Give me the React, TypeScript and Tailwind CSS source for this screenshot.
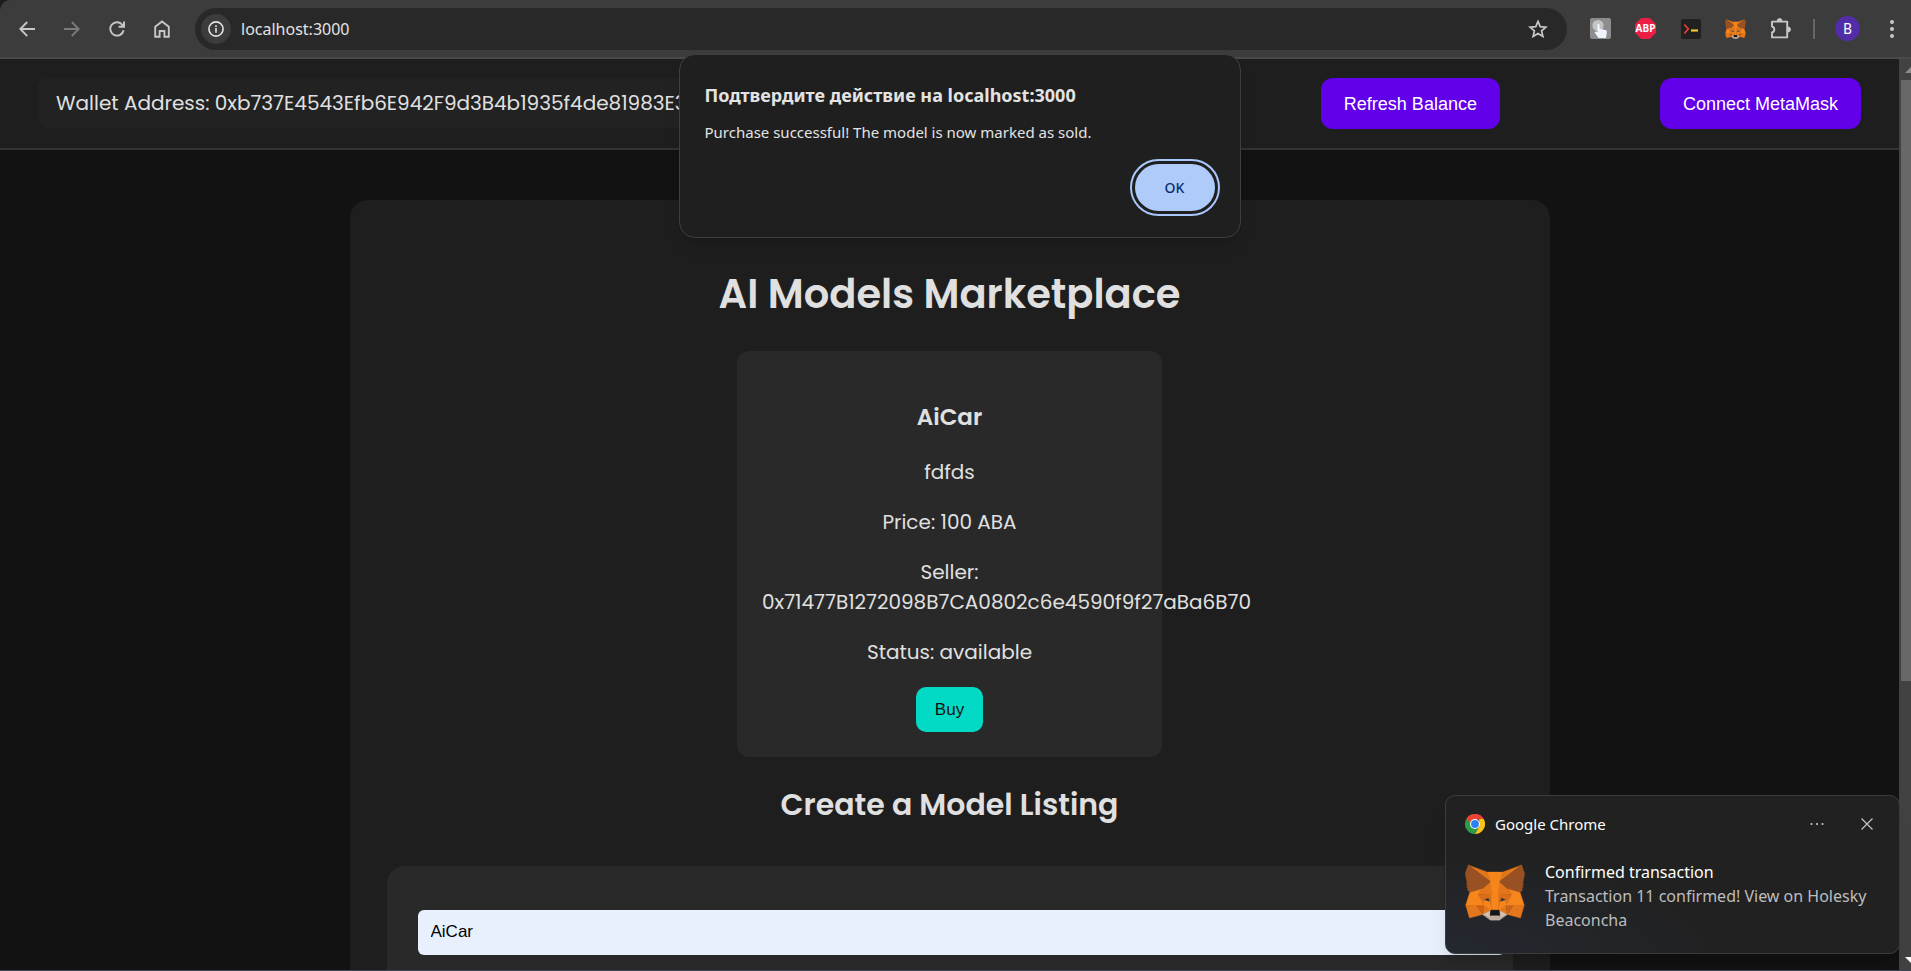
import React from "react";

const UI_FONT = "font-['Segoe_UI','Noto_Sans',sans-serif]";
const PAGE_FONT = "font-[Poppins,Inter,sans-serif]";
const FORM_FONT = "font-['Liberation_Sans',Arial,sans-serif]";

const FOX: [string, string][] = [
  ["#e2761b", "274.1,35.5 174.6,109.4 193,65.8"],
  ["#e2761b", "44.4,35.5 143.1,110.1 125.6,65.8"],
  ["#e4761b", "238.3,206.8 211.8,247.4 268.5,263 284.8,207.7"],
  ["#e4761b", "33.9,207.7 50.1,263 106.8,247.4 80.3,206.8"],
  ["#e4761b", "103.6,138.2 87.8,162.1 144.1,164.6 142.1,104.1"],
  ["#e4761b", "214.9,138.2 175.9,103.4 174.6,164.6 230.8,162.1"],
  ["#e4761b", "106.8,247.4 140.6,230.9 111.4,208.1"],
  ["#e4761b", "177.9,230.9 211.8,247.4 207.1,208.1"],
  ["#d7c1b3", "211.8,247.4 177.9,230.9 180.6,253 180.3,262.3"],
  ["#d7c1b3", "106.8,247.4 138.3,262.3 138.1,253 140.6,230.9"],
  ["#233447", "138.8,193.5 110.6,185.2 130.5,176.1"],
  ["#233447", "179.7,193.5 188,176.1 208,185.2"],
  ["#cd6116", "106.8,247.4 111.6,206.8 80.3,207.7"],
  ["#cd6116", "207,206.8 211.8,247.4 238.3,207.7"],
  ["#dd6d18", "230.8,162.1 174.6,164.6 179.8,193.5 188.1,176.1 208.1,185.2"],
  ["#dd6d18", "110.6,185.2 130.6,176.1 138.8,193.5 144.1,164.6 87.8,162.1"],
  ["#e4751f", "87.8,162.1 111.4,208.1 110.6,185.2"],
  ["#e4751f", "208.1,185.2 207.1,208.1 230.8,162.1"],
  ["#e4751f", "144.1,164.6 138.8,193.5 145.4,227.6 146.9,182.7"],
  ["#e4751f", "174.6,164.6 171.9,182.6 173.1,227.6 179.8,193.5"],
  ["#f6851b", "179.8,193.5 173.1,227.6 177.9,230.9 207.1,208.1 208.1,185.2"],
  ["#f6851b", "110.6,185.2 111.4,208.1 140.6,230.9 145.4,227.6 138.8,193.5"],
  ["#c0ad9e", "180.3,262.3 180.6,253 178.1,250.8 140.4,250.8 138.1,253 138.3,262.3 106.8,247.4 117.8,256.4 140.1,271.9 178.4,271.9 200.8,256.4 211.8,247.4"],
  ["#161616", "177.9,230.9 173.1,227.6 145.4,227.6 140.6,230.9 138.1,253 140.4,250.8 178.1,250.8 180.6,253"],
  ["#995124", "278.3,114.2 286.8,73.4 274.1,35.5 177.9,106.9 214.9,138.2 267.2,153.5 278.8,140 273.8,136.4 281.8,129.1 275.6,124.3 283.6,118.2"],
  ["#995124", "31.8,73.4 40.3,114.2 34.9,118.2 42.9,124.3 36.8,129.1 44.8,136.4 39.8,140 51.3,153.5 103.6,138.2 140.6,106.9 44.4,35.5"],
  ["#f6851b", "267.2,153.5 214.9,138.2 230.8,162.1 207.1,208.1 238.3,207.7 284.8,207.7"],
  ["#f6851b", "103.6,138.2 51.3,153.5 33.9,207.7 80.3,207.7 111.4,208.1 87.8,162.1"],
  ["#f6851b", "174.6,164.6 177.9,106.9 193.1,65.8 125.6,65.8 140.6,106.9 144.1,164.6 145.3,182.8 145.4,227.6 173.1,227.6 173.3,182.8"],
];

function Fox({ className }: { className: string }) {
  return (
    <svg viewBox="31 32 257 243" className={className} strokeWidth="1.5" strokeLinejoin="round" aria-hidden="true">
      {FOX.map(([fill, points], i) => (
        <polygon key={i} fill={fill} stroke={fill} points={points} />
      ))}
    </svg>
  );
}

function ChromeLogo() {
  return (
    <svg viewBox="0 0 48 48" className="size-5" aria-hidden="true">
      <path d="M3.2 12A24 24 0 0 1 44.8 12L24 14Z" fill="#ea4335" />
      <path d="M3.2 12A24 24 0 0 0 24 48L34 30Z" fill="#2b9d48" />
      <path d="M44.8 12A24 24 0 0 1 24 48L34.4 30L34 12Z" fill="#fbc116" />
      <path d="M3.2 12L13.6 30L24 24L20 12Z" fill="#2b9d48" />
      <path d="M3.2 12A24 24 0 0 1 44.8 12H24A12 12 0 0 0 13.6 18L12 21Z" fill="#ea4335" />
      <circle cx="24" cy="24" r="12" fill="#fff" />
      <circle cx="24" cy="24" r="9.5" fill="#2f80f5" />
    </svg>
  );
}

const iconButton = "flex h-10 w-[45px] shrink-0 items-center justify-center text-[#c7c7c7]";

function Toolbar() {
  return (
    <div className="bg-[#1c1c1c]">
      <div className="flex h-[59px] items-center rounded-tl-[10px] border-b-2 border-[#4a4a4a] bg-[#3c3c3c] pl-1">
        <button aria-label="Назад" className={iconButton}>
          <svg viewBox="0 0 16 16" className="size-4" fill="none" stroke="currentColor" strokeWidth="1.8">
            <path d="M16 8H1.5M8.2 1L1.3 8l6.9 7" />
          </svg>
        </button>
        <button aria-label="Вперёд" className="flex h-10 w-[45px] shrink-0 items-center justify-center text-[#7b7b7b]">
          <svg viewBox="0 0 16 16" className="size-4" fill="none" stroke="currentColor" strokeWidth="1.8">
            <path d="M0 8h14.5M7.8 1l6.9 7-6.9 7" />
          </svg>
        </button>
        <button aria-label="Обновить" className={iconButton}>
          <svg viewBox="0 0 16 16" className="size-4" fill="none" stroke="currentColor" strokeWidth="1.9">
            <path d="M14.6 9.2A6.7 6.7 0 1 1 12.9 3.3L14.6 5M15 .4v5.400H9.600" />
            <path d="M15.500 1.500v4.500H11Z" fill="currentColor" stroke="none" />
          </svg>
        </button>
        <button aria-label="Главная" className={iconButton}>
          <svg viewBox="0 0 16 18" className="h-[18px] w-4" fill="none" stroke="currentColor" strokeWidth="1.9">
            <path d="M1.2 16.8V6.8L8 1.5l6.8 5.3v10H10.4V11H5.6v5.8Z" />
          </svg>
        </button>
        <div className="ml-[11px] flex h-[42px] flex-1 items-center rounded-full bg-[#282828] pr-[18px] pl-[6px]">
          <button aria-label="Сведения о сайте" className="flex size-[30px] items-center justify-center rounded-full bg-[#3c3c3c] text-[#e3e3e3]">
            <svg viewBox="0 0 16 16" className="size-4" fill="none" stroke="currentColor" strokeWidth="1.6">
              <circle cx="8" cy="8" r="7.1" />
              <path d="M8 7v4.8M8 4.2v1.7" />
            </svg>
          </button>
          <input
            aria-label="Адресная строка"
            defaultValue="localhost:3000"
            className="ml-[10px] min-w-0 flex-1 bg-transparent text-base text-[#e3e3e3] outline-none"
          />
          <button aria-label="Добавить в закладки" className="flex size-[22px] items-center justify-center text-[#c7c7c7]">
            <svg viewBox="0 0 20 20" className="size-5" fill="none" stroke="currentColor" strokeWidth="1.7">
              <path d="M10 2.4l2.2 5.3 5.7.5-4.3 3.7 1.3 5.6-4.9-3-4.9 3 1.3-5.6-4.3-3.7 5.7-.5Z" />
            </svg>
          </button>
        </div>
        <div className="flex items-center pl-[11px]">
          <button aria-label="Click extension" className={iconButton}>
            <svg viewBox="0 0 21 21" className="size-[21px]">
              <rect width="21" height="21" rx="2" fill="#8d8d8d" />
              <circle cx="8" cy="7.5" r="5.6" fill="#c4c4c4" />
              <path d="M7.4 6.6c1-1 2.2-.3 2.3.7v3.4l5.6 1.2c1.2.3 1.8 1 1.6 2.2l-.9 6H8.5L4.6 14.4c.4-1 1.5-1 2.8-.2Z" fill="#eef4fb" />
            </svg>
          </button>
          <button aria-label="Adblock Plus" className={iconButton}>
            <svg viewBox="0 0 21 21" className="size-[21px]">
              <path d="M6.2 0h8.6L21 6.2v8.6L14.8 21H6.2L0 14.8V6.2Z" fill="#ed1e45" />
              <text x="10.5" y="14.2" textAnchor="middle" fontSize="10" fontWeight="700" fontFamily="Noto Sans" fill="#fff">ABP</text>
            </svg>
          </button>
          <button aria-label="Terminal" className={iconButton}>
            <svg viewBox="0 0 20 20" className="size-5">
              <rect width="20" height="20" rx="2" fill="#202020" />
              <path d="M3.3 5.5l4 4.5-4 4.5" fill="none" stroke="#e0402f" strokeWidth="1.8" />
              <path d="M10 11.5h7" stroke="#f5c52e" strokeWidth="2.2" />
            </svg>
          </button>
          <button aria-label="MetaMask" className={iconButton}>
            <Fox className="h-5 w-[21px]" />
          </button>
          <button aria-label="Расширения" className={iconButton}>
            <svg viewBox="0 0 22 21" className="h-[21px] w-[22px]">
              <path d="M2 3.6h15.2v15.8H2v-4.900a3.100 3.100 0 0 0 0-6Z" fill="none" stroke="currentColor" strokeWidth="1.9" strokeLinejoin="round" />
              <path d="M7.2 3a2.400 2.400 0 0 1 4.800 0ZM18 9a2.500 2.500 0 0 1 0 5Z" fill="currentColor" stroke="currentColor" />
            </svg>
          </button>
          <span className="ml-[10px] h-5 w-[2px] bg-[#666666]" />
          <button aria-label="Профиль" className="ml-5 flex size-[25px] items-center justify-center rounded-full bg-[#512da8] font-[Roboto,sans-serif] text-sm text-white">
            B
          </button>
          <button aria-label="Меню" className="ml-[20px] flex h-10 w-6 items-center justify-center text-[#c7c7c7]">
            <svg viewBox="0 0 4 18" className="h-[18px] w-1" fill="currentColor">
              <circle cx="2" cy="2" r="2" />
              <circle cx="2" cy="9" r="2" />
              <circle cx="2" cy="16" r="2" />
            </svg>
          </button>
          <span className="w-[7px]" />
        </div>
      </div>
    </div>
  );
}

const headerButton = `h-[51px] rounded-[12px] bg-[#6200ea] px-[23px] text-lg text-white ${FORM_FONT}`;

function Site() {
  return (
    <div className={`min-w-0 flex-1 overflow-hidden bg-[#121212] text-xl leading-[30px] text-[#e0e0e0] ${PAGE_FONT}`}>
      <header className="flex items-start gap-40 border-b-2 border-[#333333] bg-[#1e1e1e] px-[38px] py-[19px]">
        <div className="mr-auto rounded-[10px] bg-[#222222] px-[18px] py-[10px] whitespace-nowrap">
          Wallet Address: 0xb737E4543Efb6E942F9d3B4b1935f4de81983E3
        </div>
        <button className={headerButton}>Refresh Balance</button>
        <button className={headerButton}>Connect MetaMask</button>
      </header>

      <main className="mx-auto mt-[50px] max-w-[1200px] rounded-[18px] bg-[#1e1e1e] px-[37px] pt-[64px] pb-10">
        <h1 className="text-center text-[40px] leading-[60px] font-semibold">AI Models Marketplace</h1>

        <article className="mx-auto mt-[27px] w-[425px] rounded-[12px] bg-[#292929] p-[25px] text-center">
          <h3 className="mt-[23px] mb-[22px] text-[23px] leading-9 font-semibold">AiCar</h3>
          <div className="flex flex-col gap-5">
            <p>fdfds</p>
            <p>Price: 100 ABA</p>
            <p>Seller: 0x71477B1272098B7CA0802c6e4590f9f27aBa6B70</p>
            <p>Status: available</p>
            <button className={`h-[45px] self-center rounded-[10px] bg-[#03dac6] px-[19px] text-[17px] text-[#121212] ${FORM_FONT}`}>
              Buy
            </button>
          </div>
        </article>

        <h2 className="mt-[25px] text-center text-[30px] leading-[45px] font-semibold">Create a Model Listing</h2>

        <form className="mt-[39px] rounded-[18px] bg-[#292929] px-[31px] pt-[44px] pb-10">
          <input
            aria-label="Model name"
            defaultValue="AiCar"
            className={`block h-[45px] w-[calc(100%+23px)] rounded-[6px] bg-[#e8f0fe] px-[13px] pb-[2px] text-[17px] text-black outline-none ${FORM_FONT}`}
          />
        </form>
      </main>
    </div>
  );
}

function Scrollbar() {
  return (
    <div aria-hidden="true" className="flex w-3 shrink-0 flex-col bg-[#424242] pl-[2px]">
      <svg viewBox="0 0 10 21" className="h-[21px] w-[10px] shrink-0">
        <path d="M4 14L10 8v6Z" fill="#8b8b8b" />
      </svg>
      <div className="h-[66%] bg-[#686868]" />
      <svg viewBox="0 0 10 21" className="mt-auto h-[21px] w-[10px] shrink-0">
        <path d="M4 8h6v6Z" fill="#ffffff" />
      </svg>
    </div>
  );
}

function AlertDialog() {
  return (
    <div
      role="alertdialog"
      aria-labelledby="alert-title"
      aria-describedby="alert-text"
      className="absolute top-[54px] left-1/2 ml-[-277px] flex w-[562px] flex-col rounded-[16px] border border-[#3f3f3f] bg-[#1f1f1f] px-[25px] py-[26px] text-[#e3e3e3] shadow-lg"
    >
      <h2 id="alert-title" className="text-lg leading-7 font-bold">Подтвердите действие на localhost:3000</h2>
      <p id="alert-text" className="mt-[13px] text-[15px] leading-5">Purchase successful! The model is now marked as sold.</p>
      <button className="mt-[22px] h-[47px] w-20 self-end rounded-full bg-[#aecbfa] text-sm font-medium text-[#062e6f] outline-2 outline-offset-3 outline-[#a8c7fa]">
        OK
      </button>
    </div>
  );
}

function Notification() {
  return (
    <section
      aria-label="Google Chrome"
      className="absolute right-[11px] bottom-[16px] w-[455px] rounded-[10px] border border-[#3c3c3c] bg-[#212121] bg-radial-[at_0%_100%] from-[#242830] to-[#212121] to-45% px-[19px] pt-[16px] pb-[21px] text-white shadow-xl"
    >
      <div className="-mr-[3px] flex h-6 items-center">
        <ChromeLogo />
        <span className="ml-[10px] text-[15px]">Google Chrome</span>
        <button aria-label="Параметры" className="ml-auto flex h-6 w-8 items-center justify-center">
          <svg viewBox="0 0 14 4" className="h-1 w-[14px]" fill="#c4c4c4">
            <circle cx="1.5" cy="2" r="1.1" />
            <circle cx="7" cy="2" r="1.1" />
            <circle cx="12.5" cy="2" r="1.1" />
          </svg>
        </button>
        <button aria-label="Закрыть" className="ml-[18px] flex size-8 items-center justify-center">
          <svg viewBox="0 0 12 12" className="size-3" stroke="#c4c4c4" strokeWidth="1.2">
            <path d="M.5.5l11 11M11.5.5l-11 11" />
          </svg>
        </button>
      </div>
      <div className="mt-[24px] flex gap-5">
        <Fox className="mt-[4px] h-[57px] w-[60px] shrink-0" />
        <div className="text-base leading-6">
          <p>Confirmed transaction</p>
          <p className="text-[#bdbdbd]">Transaction 11 confirmed! View on Holesky Beaconcha</p>
        </div>
      </div>
    </section>
  );
}

export default function App() {
  return (
    <div className={`relative flex h-screen flex-col overflow-hidden border-b border-[#3a4656] bg-[#121212] ${UI_FONT}`}>
      <Toolbar />
      <div className="flex min-h-0 flex-1">
        <Site />
        <Scrollbar />
      </div>
      <AlertDialog />
      <Notification />
    </div>
  );
}
